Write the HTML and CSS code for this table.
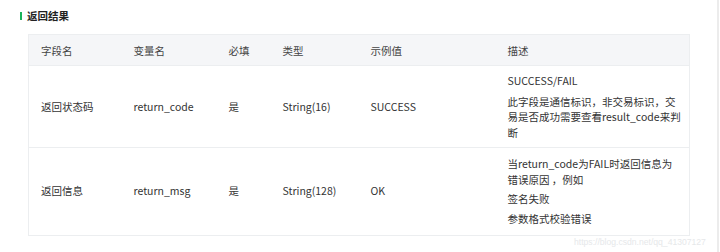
FILE: index.html
```html
<!DOCTYPE html>
<html lang="zh">
<head>
<meta charset="utf-8">
<link rel="stylesheet" href="styles.css">
</head>
<body>
<div class="page">
  <h3 class="title"><span class="bar"></span>返回结果</h3>
  <table class="tbl">
    <colgroup>
      <col class="c1"><col class="c2"><col class="c3"><col class="c4"><col class="c5"><col class="c6">
    </colgroup>
    <thead>
      <tr><th>字段名</th><th>变量名</th><th>必填</th><th>类型</th><th>示例值</th><th>描述</th></tr>
    </thead>
    <tbody>
      <tr class="r1">
        <td>返回状态码</td><td>return_code</td><td>是</td><td>String(16)</td><td>SUCCESS</td>
        <td class="desc"><p class="first">SUCCESS/FAIL</p><p>此字段是通信标识，非交易标识，交易是否成功需要查看result_code来判断</p></td>
      </tr>
      <tr class="r2">
        <td>返回信息</td><td>return_msg</td><td>是</td><td>String(128)</td><td>OK</td>
        <td class="desc"><p>当return_code为FAIL时返回信息为错误原因 ，例如</p><p>签名失败</p><p>参数格式校验错误</p></td>
      </tr>
    </tbody>
  </table>
  <div class="wm">https://blog.csdn.net/qq_41307127</div>
  <div class="edge"></div>
</div>
</body>
</html>
```
FILE: styles.css
```css
html, body { margin: 0; padding: 0; background: #fff; }
body {
  font-family: "Microsoft YaHei", "Noto Sans CJK SC", "Noto Sans", sans-serif;
  color: #333;
  width: 720px; height: 252px; overflow: hidden;
}
.page { position: relative; width: 720px; height: 252px; padding: 9px 0 0 20px; box-sizing: border-box; }
.title {
  margin: 0; font-size: 10.5px; font-weight: bold; line-height: 14px; color: #222;
  display: flex; align-items: center; gap: 5px;
}
.bar { width: 2px; height: 8px; background: #19b35a; display: inline-block; }
.tbl {
  margin: 11px 0 0 8px; border-collapse: collapse; table-layout: fixed; width: 661px;
  font-size: 10.5px; border: 1px solid #eceef0;
}
.c1 { width: 93px; } .c2 { width: 95px; } .c3 { width: 54px; } .c4 { width: 88px; } .c5 { width: 137px; } .c6 { width: 194px; }
th { background: #f5f6f8; font-weight: normal; text-align: left; height: 30px; padding: 0 0 0 12px; color: #444; }
td { padding: 7px 8px 7px 12px; vertical-align: middle; line-height: 15.5px; border-top: 1px solid #eceef0; color: #333; }
.r2 td { padding-top: 8px; padding-bottom: 9px; }
.desc p { margin: 4px 0 0; }
.desc p:first-child { margin-top: 0; }
.desc p.first { margin-bottom: 5px; }
.wm {
  position: absolute; left: 574px; top: 237px; font-size: 8.6px; color: #e6e8ea;
  font-family: "Liberation Sans", sans-serif; white-space: nowrap;
}
.edge { position: absolute; right: 1px; top: 0; width: 2px; height: 252px; background: #ececec; }
```
